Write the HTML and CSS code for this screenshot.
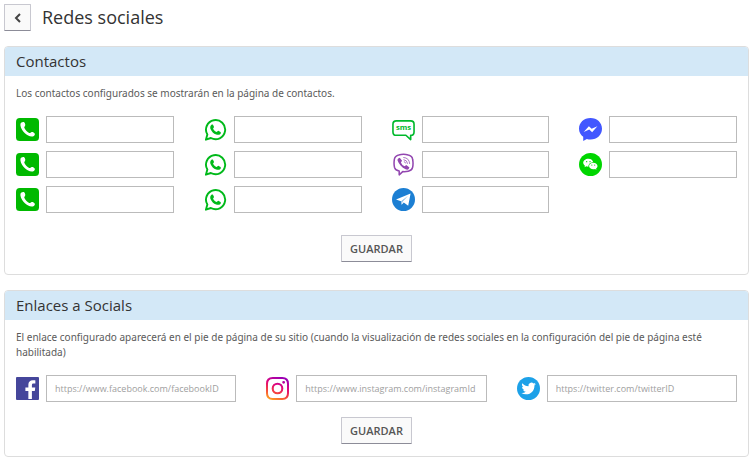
FILE: index.html
```html
<!DOCTYPE html>
<html lang="es">
<head>
    <meta charset="UTF-8">
    <meta name="viewport" content="width=device-width, initial-scale=1.0">
    <title>Redes sociales</title>
    <link rel="stylesheet" href="styles.css">
</head>
<body>
<!-- gradients do not paint from a display: none svg -->
<svg class="gradients" aria-hidden="true">
    <linearGradient id="instagramGradient" x1="0.2" y1="1" x2="0.6" y2="0">
        <stop offset="0" stop-color="#ffa51f"/>
        <stop offset="0.35" stop-color="#f4403f"/>
        <stop offset="0.65" stop-color="#e0057c"/>
        <stop offset="1" stop-color="#9a00b4"/>
    </linearGradient>
</svg>

<!-- icon sprite -->
<svg class="sprite" aria-hidden="true">
    <symbol id="icon-phone" viewBox="0 0 24 24">
        <rect width="24" height="24" rx="4" fill="#00b900"/>
        <path d="M4.700 5.900C5.100 4.500 7.400 3.600 8.500 4.500C9.500 5.400 10 7 9.500 8.100C9.200 8.800 8.400 9.200 8.700 10.200C9.500 12.400 11.600 14.700 13.800 15.600C14.800 16 15.200 15.100 15.900 14.800C17.100 14.300 18.900 15.100 19.500 16.200C20.200 17.500 19 18.900 17.600 19.200C14.900 19.800 11.600 18.200 9.300 15.900C6.700 13.300 4 8.900 4.700 5.900z" fill="#fff"/>
    </symbol>
    <symbol id="icon-whatsapp" viewBox="0 0 24 24">
        <path d="M2 22.600L3.500 17.300A10 10 0 1 1 7.200 20.900z" fill="none" stroke="#00b91a" stroke-width="2" stroke-linejoin="round"/>
        <path d="M7.600 7.200C8.100 6.600 9.100 6.500 9.500 7.200L10.400 9.200C10.700 10 9.500 10.700 9.500 11.200C10.200 12.800 11.600 14 13.200 14.600C13.800 14.600 14.400 13.300 15 13.400L17.200 14.500C17.900 14.900 17.600 16 17.100 16.600C16.100 17.700 14.300 17.900 12.700 17.200C10 16.200 7.900 14.100 6.800 11.400C6.200 9.800 6.500 8.200 7.600 7.200z" fill="#00b91a"/>
    </symbol>
    <symbol id="icon-sms" viewBox="0 0 24 24">
        <path d="M4.500 3H19.500Q23 3 23 6.500V14.500Q23 18 19.500 18V22.500L14.500 18H4.500Q1 18 1 14.500V6.500Q1 3 4.500 3z" fill="none" stroke="#00b92c" stroke-width="1.700" stroke-linejoin="round"/>
        <text x="12" y="13" text-anchor="middle" class="sms-text">sms</text>
    </symbol>
    <symbol id="icon-viber" viewBox="0 0 24 24">
        <path d="M7 2Q12 .8 17 2Q21 2.800 21.500 6.500Q22.400 11 21.500 15Q20.800 18.300 17 19Q13.800 19.700 11.200 19.400L7.500 22.800V18.900Q3.600 18.300 2.600 15Q1.700 11 2.500 6.500Q3.200 2.800 7 2z" fill="none" stroke="#9246b0" stroke-width="1.600" stroke-linejoin="round"/>
        <path d="M6.500 5.700L8.100 4.900L10.500 8.200L9.300 10Q10.200 12.800 13.200 13.800L14.900 12.600L18.200 15L17.200 17Q16 18 14.200 17C10.200 15 7 11.500 5.800 7.800Q5.400 6.500 6.500 5.700z" fill="#9246b0"/>
        <path d="M12.200 4.700Q18 5 18.400 11M12.400 7Q15.800 7.300 16.200 10.800M12.800 9.100Q14 9.300 14.200 10.500" fill="none" stroke="#a86fc0" stroke-width="1" stroke-linecap="round"/>
    </symbol>
    <symbol id="icon-telegram" viewBox="0 0 24 24">
        <circle cx="12" cy="12" r="12" fill="#1c7fd3"/>
        <path d="M4.200 11.900L19.400 5.800L16.900 18.400L12.300 15.100L10 17.600L9.400 13.700z" fill="#fff"/>
        <path d="M9.400 13.700L16.800 8L11 14.300L10 17.600z" fill="#8dbfe8"/>
    </symbol>
    <symbol id="icon-messenger" viewBox="0 0 24 24">
        <path d="M12 0C18.900 0 24 4.900 24 11.200S18.900 22.400 12 22.400C10.600 22.400 9.400 22.200 8.200 21.800L4.400 24V19.600C1.700 17.600 0 14.700 0 11.200C0 4.900 5.100 0 12 0z" fill="#4257ff"/>
        <path d="M4.900 14.700L10.300 8.600L13.200 11.300L19.200 8.600L13.700 14.800L10.700 12z" fill="#fff"/>
    </symbol>
    <symbol id="icon-wechat" viewBox="0 0 24 24">
        <circle cx="12" cy="12" r="12" fill="#00d600"/>
        <path d="M9.800 6C12.600 6 14.600 7.700 14.800 9.600C11.800 9.700 9.600 11.700 9.900 14.200C9.100 14.300 8.300 14.100 7.600 13.900L5.800 14.800L6.200 13.200C5.100 12.500 4.400 11.400 4.400 10.200C4.400 7.900 6.800 6 9.800 6z" fill="#fff"/>
        <path d="M14.900 10.100C17.400 10.100 19.300 11.600 19.300 13.600C19.300 14.700 18.700 15.600 17.800 16.200L18.200 17.600L16.700 16.800C13.500 17.600 10.500 16 10.500 13.600C10.500 11.600 12.400 10.100 14.900 10.100z" fill="#fff"/>
        <g fill="#00d600">
            <circle cx="8" cy="9" r=".7"/>
            <circle cx="11.500" cy="9" r=".7"/>
            <circle cx="13.400" cy="12.600" r=".6"/>
            <circle cx="16.400" cy="12.600" r=".6"/>
        </g>
    </symbol>
    <symbol id="icon-facebook" viewBox="0 0 24 24">
        <rect width="24" height="24" rx="1" fill="#45469b"/>
        <path d="M12.900 23V14.500H9.800V10.900H12.900V8.200C12.900 5.100 14.800 3.500 17.500 3.500C18.800 3.500 19.900 3.600 20.200 3.700V6.900H18.300C16.900 6.900 16.600 7.600 16.600 8.600V10.900H20.100L19.600 14.500H16.600V23z" fill="#fff"/>
    </symbol>
    <symbol id="icon-instagram" viewBox="0 0 24 24">
        <path fill="url(#instagramGradient)" fill-rule="evenodd" d="M7 0H17Q24 0 24 7V17Q24 24 17 24H7Q0 24 0 17V7Q0 0 7 0zM7 2.100Q2.100 2.100 2.100 7V17Q2.100 21.900 7 21.900H17Q21.900 21.900 21.900 17V7Q21.900 2.100 17 2.100zM12 5.900A6.100 6.100 0 1 1 12 18.100A6.100 6.100 0 1 1 12 5.900zM12 8.100A3.900 3.900 0 1 0 12 15.900A3.900 3.900 0 1 0 12 8.100zM18.400 4.100A1.500 1.500 0 1 1 18.400 7.100A1.500 1.500 0 1 1 18.400 4.100z"/>
    </symbol>
    <symbol id="icon-twitter" viewBox="0 0 24 24">
        <circle cx="12" cy="12" r="12" fill="#1da1e8"/>
        <path transform="translate(4.600 4.400) scale(.63)" fill="#fff" d="M23.953 4.570a10 10 0 0 1-2.825.775 4.958 4.958 0 0 0 2.163-2.723c-.951.555-2.005.959-3.127 1.184a4.920 4.920 0 0 0-8.384 4.482C7.690 8.095 4.067 6.130 1.640 3.162a4.822 4.822 0 0 0-.666 2.475c0 1.710.870 3.213 2.188 4.096a4.904 4.904 0 0 1-2.228-.616v.060a4.923 4.923 0 0 0 3.946 4.827 4.996 4.996 0 0 1-2.212.085 4.936 4.936 0 0 0 4.604 3.417 9.867 9.867 0 0 1-6.102 2.105c-.390 0-.779-.023-1.170-.067a13.995 13.995 0 0 0 7.557 2.209c9.053 0 13.998-7.496 13.998-13.985 0-.210 0-.420-.015-.630A9.935 9.935 0 0 0 24 4.590z"/>
    </symbol>
</svg>

<header class="page-header">
    <button type="button" class="btn btn-back" aria-label="Volver">
        <svg viewBox="0 0 12 12" width="12" height="12"><path d="M8 2L4 6L8 10" fill="none" stroke="#444" stroke-width="2"/></svg>
    </button>
    <h1>Redes sociales</h1>
</header>

<main>
    <section class="panel">
        <h2>Contactos</h2>
        <form class="panel-body">
            <p>Los contactos configurados se mostrarán en la página de contactos.</p>
            <div class="contacts">
                <div class="field">
                    <label for="phone1" aria-label="Teléfono 1"><svg><use href="#icon-phone"/></svg></label>
                    <input type="tel" id="phone1" name="phone1">
                </div>
                <div class="field">
                    <label for="phone2" aria-label="Teléfono 2"><svg><use href="#icon-phone"/></svg></label>
                    <input type="tel" id="phone2" name="phone2">
                </div>
                <div class="field">
                    <label for="phone3" aria-label="Teléfono 3"><svg><use href="#icon-phone"/></svg></label>
                    <input type="tel" id="phone3" name="phone3">
                </div>
                <div class="field">
                    <label for="whatsapp1" aria-label="WhatsApp 1"><svg><use href="#icon-whatsapp"/></svg></label>
                    <input type="tel" id="whatsapp1" name="whatsapp1">
                </div>
                <div class="field">
                    <label for="whatsapp2" aria-label="WhatsApp 2"><svg><use href="#icon-whatsapp"/></svg></label>
                    <input type="tel" id="whatsapp2" name="whatsapp2">
                </div>
                <div class="field">
                    <label for="whatsapp3" aria-label="WhatsApp 3"><svg><use href="#icon-whatsapp"/></svg></label>
                    <input type="tel" id="whatsapp3" name="whatsapp3">
                </div>
                <div class="field">
                    <label for="sms" aria-label="SMS"><svg><use href="#icon-sms"/></svg></label>
                    <input type="tel" id="sms" name="sms">
                </div>
                <div class="field">
                    <label for="viber" aria-label="Viber"><svg><use href="#icon-viber"/></svg></label>
                    <input type="text" id="viber" name="viber">
                </div>
                <div class="field">
                    <label for="telegram" aria-label="Telegram"><svg><use href="#icon-telegram"/></svg></label>
                    <input type="text" id="telegram" name="telegram">
                </div>
                <div class="field">
                    <label for="messenger" aria-label="Messenger"><svg><use href="#icon-messenger"/></svg></label>
                    <input type="text" id="messenger" name="messenger">
                </div>
                <div class="field">
                    <label for="wechat" aria-label="WeChat"><svg><use href="#icon-wechat"/></svg></label>
                    <input type="text" id="wechat" name="wechat">
                </div>
            </div>
            <button type="submit" class="btn btn-save">GUARDAR</button>
        </form>
    </section>

    <section class="panel">
        <h2>Enlaces a Socials</h2>
        <form class="panel-body">
            <p>El enlace configurado aparecerá en el pie de página de su sitio (cuando la visualización de redes sociales en la configuración del pie de página esté habilitada)</p>
            <div class="socials">
                <div class="field">
                    <label for="facebook" aria-label="Facebook"><svg><use href="#icon-facebook"/></svg></label>
                    <input type="url" id="facebook" name="facebook" placeholder="https://www.facebook.com/facebookID">
                </div>
                <div class="field">
                    <label for="instagram" aria-label="Instagram"><svg><use href="#icon-instagram"/></svg></label>
                    <input type="url" id="instagram" name="instagram" placeholder="https://www.instagram.com/instagramId">
                </div>
                <div class="field">
                    <label for="twitter" aria-label="Twitter"><svg><use href="#icon-twitter"/></svg></label>
                    <input type="url" id="twitter" name="twitter" placeholder="https://twitter.com/twitterID">
                </div>
            </div>
            <button type="submit" class="btn btn-save">GUARDAR</button>
        </form>
    </section>
</main>
</body>
</html>
```

FILE: styles.css
```css
* {
    box-sizing: border-box;
}

body {
    margin: 0;
    padding: 4px 5px 4px 4px;
    background-color: #ffffff;
    color: #5a5a5a;
    font-family: "Open Sans", sans-serif;
    font-size: 11px;
    line-height: 15px;
}

.gradients {
    display: block;
    width: 0;
    height: 0;
}

.sprite {
    display: none;
}

.page-header {
    display: flex;
    align-items: center;
    gap: 11px;
    margin-bottom: 15px;
}

h1 {
    margin: 0;
    color: #333333;
    font-size: 18px;
    font-weight: 400;
    line-height: 27px;
}

.panel {
    margin-bottom: 15px;
    border: 1px solid #dddddd;
    border-radius: 4px;
    overflow: hidden;
}

.panel:last-child {
    margin-bottom: 0;
}

.panel h2 {
    margin: 0;
    padding: 0 11px;
    background-color: #d3e8f7;
    color: #333333;
    font-size: 15px;
    font-weight: 400;
    line-height: 29px;
}

.panel-body {
    padding: 10px 11px 12px;
}

.panel-body p {
    margin: 0 0 15px;
    font-family: "Noto Sans", sans-serif;
    font-size: 10px;
}

.contacts {
    display: grid;
    grid-template-rows: repeat(3, auto);
    grid-template-columns: repeat(4, 1fr);
    grid-auto-flow: column;
    gap: 8px 30px;
    margin-bottom: 22px;
}

.socials {
    display: grid;
    grid-template-columns: repeat(3, 1fr);
    gap: 30px;
    margin-bottom: 15px;
}

.field {
    display: flex;
    align-items: center;
    gap: 7px;
    min-width: 0;
}

.field label,
.field svg {
    display: block;
    flex: none;
    width: 23px;
    height: 23px;
}

.field input {
    flex: 1;
    min-width: 0;
    height: 27px;
    padding: 0 8px;
    border: 1px solid #bbbbbb;
    border-radius: 0;
    background-color: #ffffff;
    color: #555555;
    font-family: inherit;
    font-size: 9px;
    outline: none;
}

.field input:focus {
    border-color: #1c7fd3;
}

.field input::placeholder {
    color: #a0a0a0;
}

.sms-text {
    fill: #00b92c;
    font-family: "Open Sans", sans-serif;
    font-size: 8px;
    font-weight: 700;
}

.btn {
    display: flex;
    align-items: center;
    justify-content: center;
    height: 27px;
    border: 1px solid #c8c8d0;
    border-bottom-color: #8c8c98;
    border-radius: 1px;
    background-color: #fafafa;
    color: #555555;
    font-family: inherit;
    font-size: 11px;
    font-weight: 600;
    cursor: pointer;
}

.btn:hover {
    background-color: #f0f0f0;
}

.btn-back {
    width: 27px;
    padding: 0;
}

.btn-save {
    margin: 0 auto;
    padding: 0 8px;
}
```
